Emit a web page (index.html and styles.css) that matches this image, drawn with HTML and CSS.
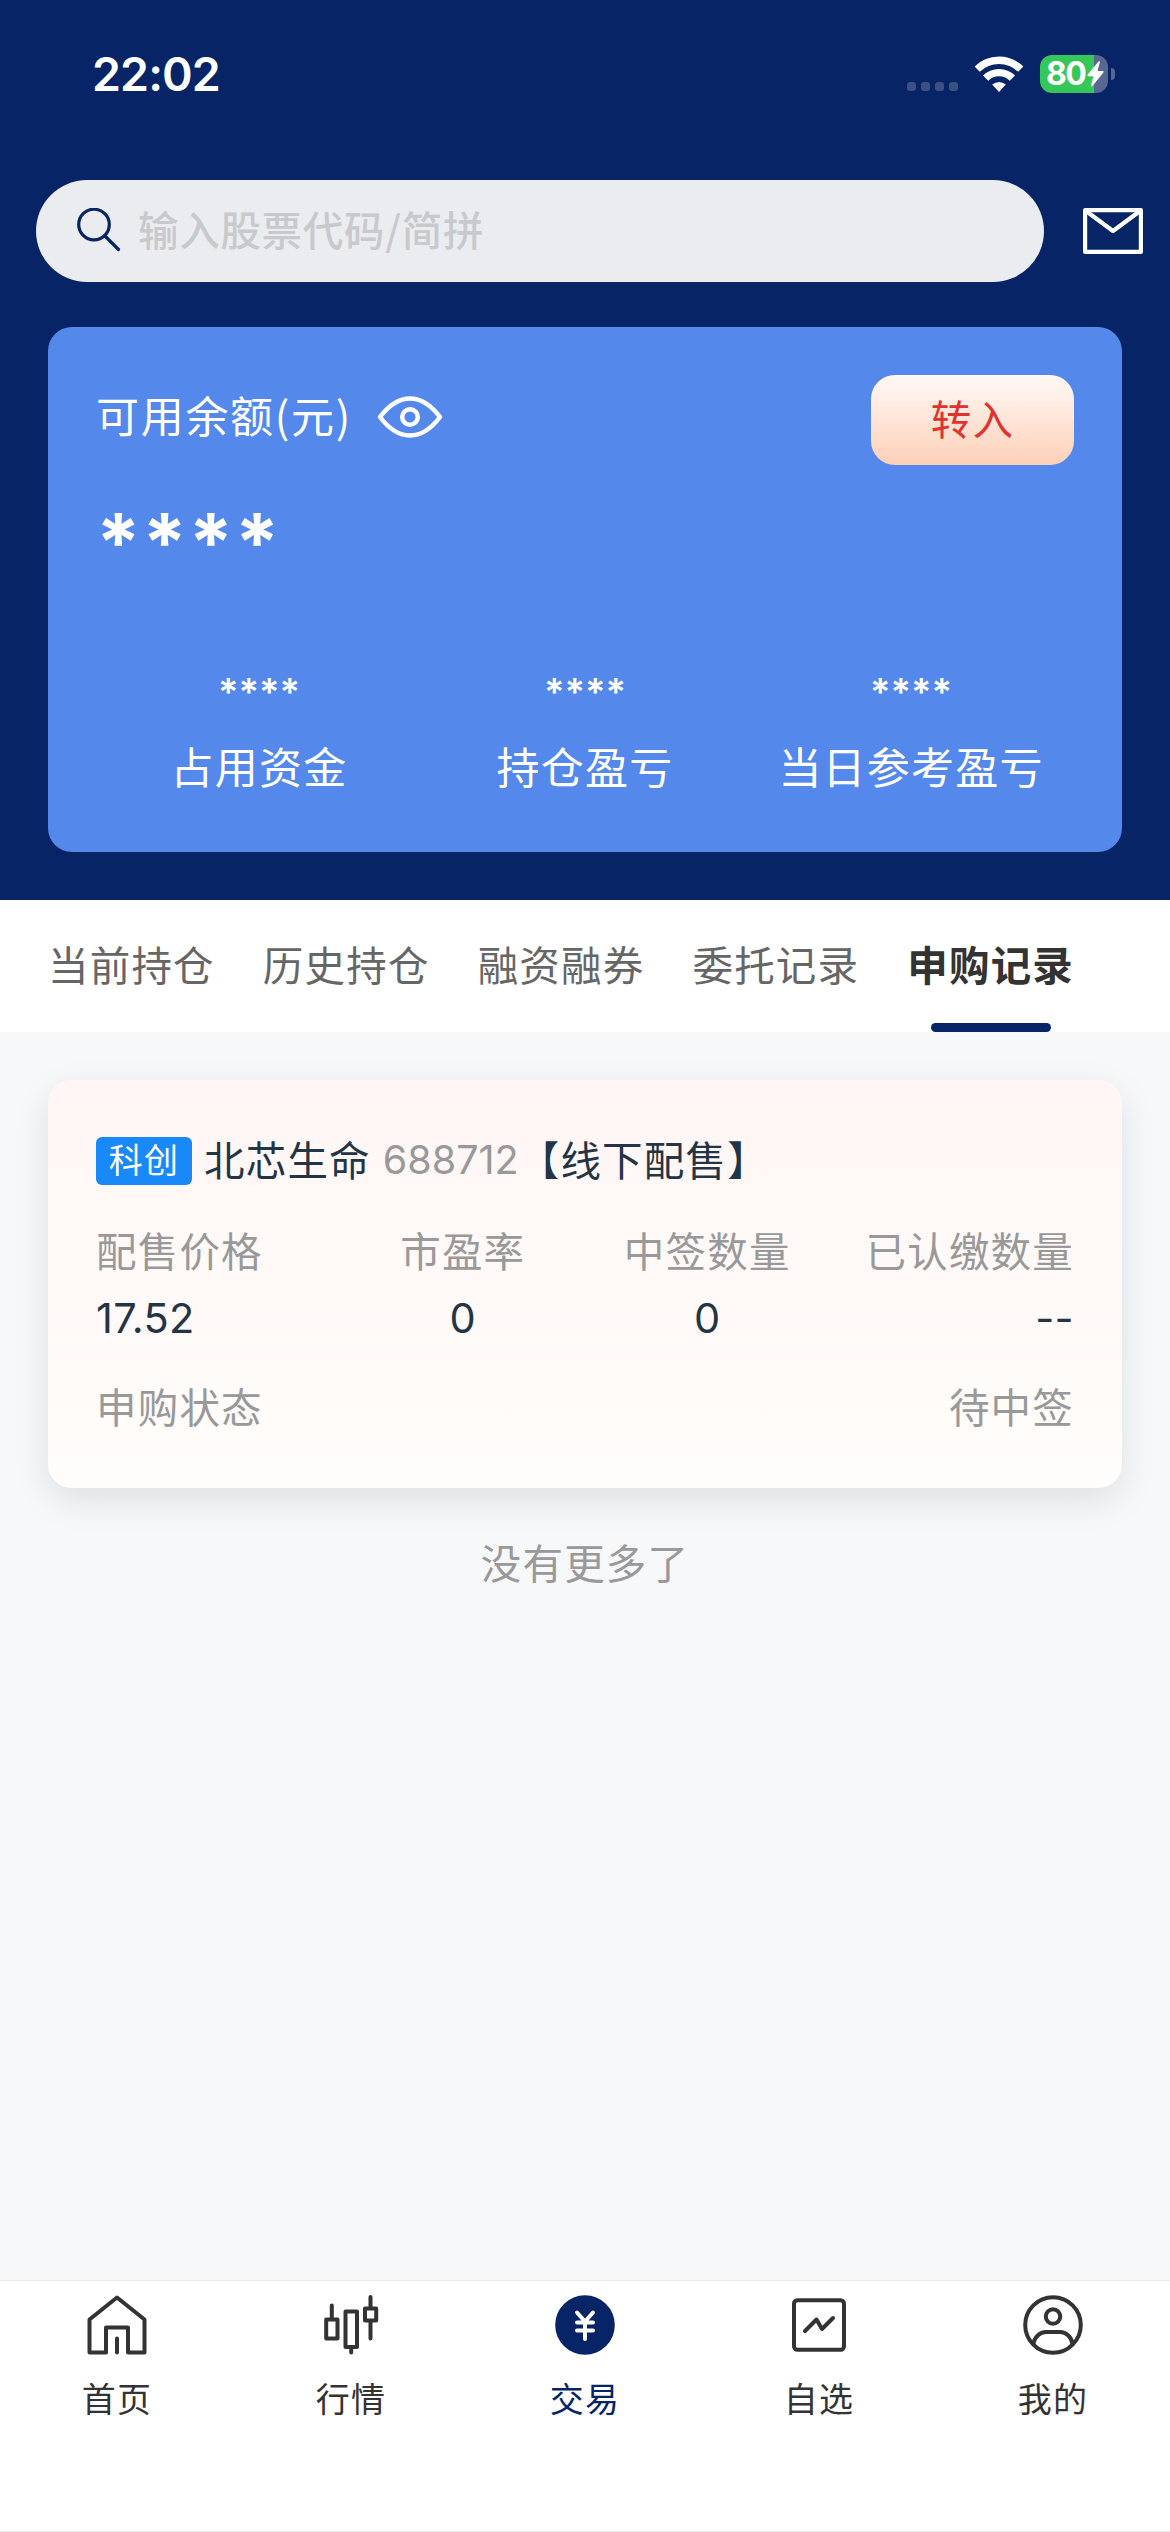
FILE: index.html
```html
<!DOCTYPE html>
<html lang="zh-CN">
<head>
<meta charset="utf-8">
<title>交易</title>
<link rel="stylesheet" href="styles.css">
</head>
<body>
<div class="app">
  <header class="header">
    <div class="status">
      <span class="time">22:02</span>
      <div class="status-right">
        <div class="signal"><i></i><i></i><i></i><i></i></div>
        <svg class="wifi" width="50" height="36" viewBox="0 0 50 36">
          <g fill="none" stroke="#fff" stroke-width="7.4">
            <path d="M3.2 13.2a31 31 0 0 1 43.600 0"/>
            <path d="M11.600 22.200a19 19 0 0 1 26.800 0"/>
          </g>
          <path fill="#fff" d="M25 36l-6.800-7.400q6.800-5.400 13.600 0z"/>
        </svg>
        <div class="battery">
          <span class="battery-text">80</span>
          <svg width="17" height="26" viewBox="0 0 17 26"><path fill="#fff" d="M11.500 0.500Q13 -0.500 12.800 1.500L10.500 10H15.500Q17.200 10.200 16.200 11.700L5.500 25Q4 26 4.200 24L6.500 15.300H1.500Q-0.200 15 0.800 13.500Z"/></svg>
        </div>
        <i class="battery-nub"></i>
      </div>
    </div>
    <div class="search-row">
      <div class="search">
        <svg width="46" height="46" viewBox="0 0 46 46" fill="none" stroke="#072466" stroke-width="3.200" stroke-linecap="round"><circle cx="18" cy="16.500" r="15.300"/><path d="M29 28L42.500 41.500"/></svg>
        <span class="placeholder">输入股票代码/简拼</span>
      </div>
      <svg class="mail" width="60" height="46" viewBox="0 0 60 46" fill="none" stroke="#fff" stroke-width="4.200" stroke-linejoin="round"><path d="M2.100 2.100H57.900V43.900H2.100Z"/><path d="M3 3L30 23L57 3"/></svg>
    </div>
    <section class="balance">
      <div class="balance-top">
        <span class="balance-title">可用余额(元)</span>
        <svg class="eye" width="66" height="42" viewBox="0 0 66 42" fill="none" stroke="#fff" stroke-width="4.500" stroke-linejoin="round"><path d="M3 21Q17 2.500 33 2.500T63 21Q49 39.500 33 39.500T3 21Z"/><circle cx="33" cy="21" r="7.800"/></svg>
        <button class="transfer">转入</button>
      </div>
      <div class="amount">****</div>
      <div class="stats">
        <div class="stat"><b>****</b><span>占用资金</span></div>
        <div class="stat"><b>****</b><span>持仓盈亏</span></div>
        <div class="stat"><b>****</b><span>当日参考盈亏</span></div>
      </div>
    </section>
  </header>
  <nav class="tabs">
    <a class="tab">当前持仓</a>
    <a class="tab">历史持仓</a>
    <a class="tab">融资融券</a>
    <a class="tab">委托记录</a>
    <a class="tab active">申购记录</a>
  </nav>
  <main class="content">
    <article class="record">
      <div class="record-head">
        <span class="badge">科创</span>
        <span class="name">北芯生命</span>
        <span class="code">688712</span>
        <span class="kind">【线下配售】</span>
      </div>
      <div class="fields">
        <div class="field start"><span>配售价格</span><b>17.52</b></div>
        <div class="field"><span>市盈率</span><b>0</b></div>
        <div class="field"><span>中签数量</span><b>0</b></div>
        <div class="field end"><span>已认缴数量</span><b>--</b></div>
      </div>
      <div class="state"><span>申购状态</span><span>待中签</span></div>
    </article>
    <p class="no-more">没有更多了</p>
  </main>
  <footer class="tabbar">
    <a class="item">
      <svg width="60" height="60" viewBox="0 0 60 60" fill="none" stroke="#333" stroke-width="4" stroke-linejoin="round" stroke-linecap="round"><path d="M2.500 24.500L30 2.500L57.500 24.500V57.500H41V32.500H19V57.500H2.500Z"/><path d="M30 43.500V57.500"/></svg>
      <span>首页</span>
    </a>
    <a class="item">
      <svg width="60" height="60" viewBox="0 0 60 60" fill="none" stroke="#333" stroke-width="4" stroke-linejoin="round" stroke-linecap="round"><path d="M5.200 24.500H16.500V43.500H5.200Z M10.800 10.500V24M24.500 16.500H36.000V52H24.500Z M30.200 53V57.500M44 13.500H55.200V25.500H44Z M49.500 2V13M49.500 26V43.500"/></svg>
      <span>行情</span>
    </a>
    <a class="item current">
      <svg width="60" height="60" viewBox="0 0 60 60"><circle cx="30" cy="30" r="29.800" fill="#072466"/><path d="M22 17.500L30 26.500L38 17.500M30 27V44M22 27.500H38M22 35.500H38" fill="none" stroke="#fff" stroke-width="4" stroke-linecap="round"/></svg>
      <span>交易</span>
    </a>
    <a class="item">
      <svg width="60" height="60" viewBox="0 0 60 60" fill="none" stroke="#333" stroke-width="4" stroke-linejoin="round" stroke-linecap="round"><rect x="5" y="5.200" width="50" height="49.600" rx="3.500"/><path d="M16 36L27.500 24.500L33 34L44 23"/></svg>
      <span>自选</span>
    </a>
    <a class="item">
      <svg width="60" height="60" viewBox="0 0 60 60" fill="none" stroke="#333" stroke-width="4"><circle cx="30" cy="30" r="27.800"/><circle cx="30" cy="21.500" r="7.200"/><path d="M10.500 49.500C11 42 17 37 23 37H37C43 37 49 42 49.500 49.500"/></svg>
      <span>我的</span>
    </a>
  </footer>
</div>
</body>
</html>
```

FILE: styles.css
```css
* { box-sizing: border-box; }
body {
  margin: 0;
  font-family: Inter, "Noto Sans CJK SC", sans-serif;
  font-size: 40.5px;
  letter-spacing: 1.2px;
  color: #333;
}
svg { display: block; flex: none; }
.app {
  width: 1170px;
  height: 2532px;
  display: flex;
  flex-direction: column;
  background: #f7f8fa;
  white-space: nowrap;
}
.header { height: 900px; background: #072466; color: #fff; }
.status {
  height: 180px;
  padding: 44px 55px 76px 92px;
  display: flex;
  justify-content: space-between;
  align-items: center;
}
.time { font-size: 46.5px; font-weight: 600; letter-spacing: -0.9px; margin-top: -1px; }
.status-right { display: flex; align-items: center; height: 38px; }
.signal { display: flex; gap: 5px; align-self: flex-end; margin: 0 16px 2px 0; }
.signal i { width: 9px; height: 9px; border-radius: 3px; background: #3b5182; }
.wifi { margin: 0 16px 1px 0; }
.battery {
  width: 68px;
  height: 38px;
  padding: 0 4px 0 6px;
  border-radius: 12px;
  background: linear-gradient(90deg, #35c759 54px, #566892 54px);
  display: flex;
  align-items: center;
  justify-content: space-between;
}
.battery-text { font-size: 32px; font-weight: 700; letter-spacing: -1.5px; line-height: 38px; }
.battery-nub { width: 4px; height: 12px; margin-left: 3px; border-radius: 0 4px 4px 0; background: #566892; }
.search-row {
  height: 102px;
  padding: 0 27px 0 36px;
  display: flex;
  align-items: center;
  justify-content: space-between;
}
.search {
  width: 1008px;
  height: 102px;
  padding: 0 40px;
  border-radius: 51px;
  background: #ebecf0;
  display: flex;
  align-items: center;
}
.placeholder {
  margin: -4px 0 0 16px;
  color: #c8c9cc;
  font-family: "Noto Sans CJK SC", sans-serif;
  font-weight: 500;
  letter-spacing: 0.7px;
  line-height: 60px;
}
.balance {
  height: 525px;
  margin: 45px 48px 0;
  padding: 48px;
  border-radius: 24px;
  background: #5488eb;
}
.balance-top { display: flex; align-items: center; height: 90px; }
.balance-title { font-family: "Noto Sans CJK SC", sans-serif; font-size: 43px; letter-spacing: 1.7px; line-height: 60px; margin-top: -13px; }
.eye { margin: -6px 0 0 25px; }
.transfer {
  width: 203px;
  height: 90px;
  margin-left: auto;
  padding: 0 0 6px;
  border: 0;
  border-radius: 24px;
  background: linear-gradient(#fff9f7, #fdd0b8);
  color: #e0322f;
  font: inherit;
  letter-spacing: inherit;
}
.amount { margin-top: 34px; height: 85px; line-height: 85px; font-size: 80px; font-weight: 700; letter-spacing: 1.5px; }
.stats { display: grid; grid-template-columns: repeat(3, 1fr); margin-top: 88px; }
.stat { display: flex; flex-direction: column; align-items: center; font-size: 43px; }
.stat b { font-size: 38px; font-weight: 600; letter-spacing: 0; line-height: 40px; }
.stat span { line-height: 60px; margin-top: 26px; }
.tabs { height: 132px; padding: 0 48px; background: #fff; display: flex; gap: 48px; }
.tab { position: relative; line-height: 134px; color: #666; }
.tab.active { color: #333; font-weight: 700; }
.tab.active::after {
  content: "";
  position: absolute;
  left: 50%;
  bottom: 0;
  width: 120px;
  height: 9px;
  margin-left: -60px;
  border-radius: 5px;
  background: #072466;
}
.content { flex: 1; padding: 48px 48px 0; }
.record {
  height: 408px;
  padding: 48px;
  border-radius: 24px;
  background: linear-gradient(#fff6f5, #fffdfb);
  box-shadow: 0 12px 36px rgba(0, 0, 0, 0.1);
  color: #233545;
}
.record-head { display: flex; align-items: center; height: 66px; line-height: 66px; }
.badge {
  width: 96px;
  height: 48px;
  border-radius: 6px;
  background: #1989fa;
  color: #fff;
  font-size: 34px;
  line-height: 47px;
  text-align: center;
}
.name { margin: 2px 0 0 12px; }
.code { margin: -3px 0 0 12px; color: #999; font-size: 39.5px; letter-spacing: 0; }
.kind { margin-top: 2px; }
.fields { display: grid; grid-template-columns: repeat(4, 1fr); margin-top: 29px; }
.field { display: flex; flex-direction: column; align-items: center; }
.field span, .state { color: #999; line-height: 60px; }
.field b { font-weight: 400; line-height: 60px; margin-top: 5px; letter-spacing: 0.3px; font-size: 41.5px; }
.field.start { align-items: flex-start; }
.field.end { align-items: flex-end; }
.state { display: flex; justify-content: space-between; margin-top: 31px; }
.no-more { margin: 47px 0 0; text-align: center; line-height: 60px; color: #999; }
.tabbar {
  height: 252px;
  padding-top: 14px;
  border-top: 1px solid #e8eaec;
  border-bottom: 1px solid #ebebeb;
  background: #fff;
  display: grid;
  grid-template-columns: repeat(5, 1fr);
  font-size: 34px;
}
.item { display: flex; flex-direction: column; align-items: center; }
.item span { line-height: 50px; margin-top: 20px; }
.current { color: #072466; }
```
